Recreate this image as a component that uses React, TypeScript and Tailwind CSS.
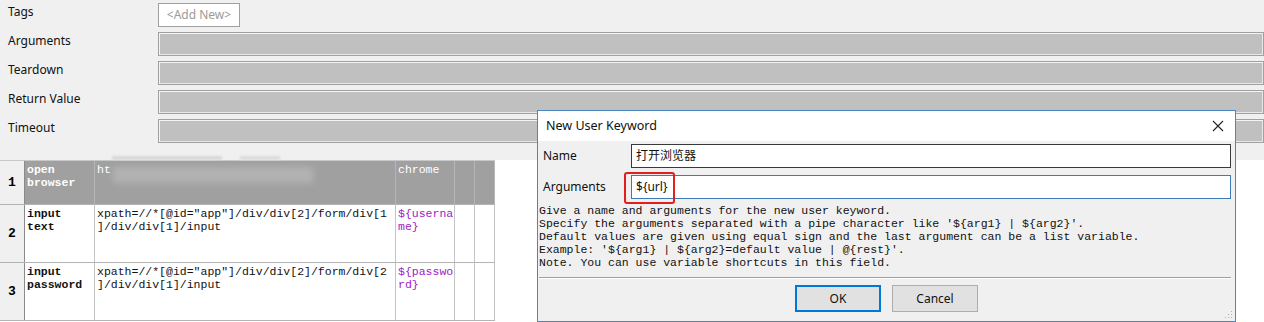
import React from 'react';

const ui = "font-['Noto_Sans','Noto_Sans_CJK_SC',sans-serif]";
const mono = "font-['Liberation_Mono','Noto_Sans_CJK_SC',monospace]";

function GrayField() {
    return (
        <div className="flex-1 h-[24px] border border-[#a0a0a0] bg-[#c0c0c0] shadow-[inset_1px_1px_0_#f4f4f4,inset_-1px_-1px_0_#e8e8e8]"></div>
    );
}

function FieldRow({ label, children }: { label: string; children: React.ReactNode }) {
    return (
        <div className="flex items-start h-[24px]">
            <div className="w-[158px] shrink-0 pl-[8px] mt-[1px] text-[12px] leading-[16px] text-[#111]">{label}</div>
            {children}
        </div>
    );
}

function Settings() {
    return (
        <section className="bg-[#f0f0f0] h-[160px] pt-[3px] flex flex-col gap-[5px]">
            <FieldRow label="Tags">
                <div className="w-[82px] h-[24px] border border-[#a0a0a0] bg-white text-[12px] leading-[22px] text-[#9a9a9a] text-center">
                    &lt;Add New&gt;
                </div>
            </FieldRow>
            <FieldRow label="Arguments"><GrayField /></FieldRow>
            <FieldRow label="Teardown"><GrayField /></FieldRow>
            <FieldRow label="Return Value"><GrayField /></FieldRow>
            <FieldRow label="Timeout"><GrayField /></FieldRow>
            {/* blurred leftovers of the toolbar strip */}
            <div className="flex gap-[18px] mt-[8px] ml-[112px]">
                <div className="w-[110px] h-[4px] bg-[#d8d8d8] blur-[1px]"></div>
                <div className="w-[40px] h-[4px] bg-[#dcdcdc] blur-[1px]"></div>
            </div>
        </section>
    );
}

type Cell = { text: string; kind?: 'kw' | 'var' | 'plain' };

const rows: { h: string; sel?: boolean; cells: Cell[] }[] = [
    { h: 'h-[44px]', sel: true, cells: [{ text: 'open\nbrowser', kind: 'kw' }, { text: 'ht' }, { text: 'chrome' }, { text: '' }, { text: '' }] },
    { h: 'h-[58px]', cells: [{ text: 'input\ntext', kind: 'kw' }, { text: 'xpath=//*[@id="app"]/div/div[2]/form/div[1\n]/div/div[1]/input' }, { text: '${userna\nme}', kind: 'var' }, { text: '' }, { text: '' }] },
    { h: 'h-[58px]', cells: [{ text: 'input\npassword', kind: 'kw' }, { text: 'xpath=//*[@id="app"]/div/div[2]/form/div[2\n]/div/div[1]/input' }, { text: '${passwo\nrd}', kind: 'var' }, { text: '' }, { text: '' }] },
];

const colW = ['w-[70px]', 'w-[301px]', 'w-[59px]', 'w-[20px]', 'w-[20px]'];

function Grid() {
    return (
        <div className="flex-1 bg-white">
            <div className="w-[495px] border-t border-[#c8c8c8]">
                {rows.map((r, i) => (
                    <div key={i} className={`flex ${r.h} border-b border-[#b4b4b4]`}>
                        <div className="w-[25px] shrink-0 bg-[#f0f0f0] border-r border-[#8a8a8a] flex items-center justify-center">
                            <span className={`${mono} font-bold text-[13px] text-black`}>{i + 1}</span>
                        </div>
                        {r.cells.map((c, j) => (
                            <div
                                key={j}
                                className={`${colW[j]} shrink-0 relative overflow-hidden border-r ${r.sel ? 'bg-[#a0a0a0] border-[#b6b6b6] text-white' : 'bg-white border-[#c4c4c4] text-[#111]'} pl-[2px] pt-[2px]`}
                            >
                                {r.sel && j === 1 && (
                                    <div className="absolute left-[18px] top-[6px] w-[200px] h-[16px] bg-[#b2b2b2] blur-[3px]"></div>
                                )}
                                <div
                                    className={`${mono} relative text-[11.5px] leading-[13px] whitespace-pre ${c.kind === 'kw' ? 'font-bold' : ''} ${c.kind === 'var' ? 'text-[#a020c8]' : ''}`}
                                >
                                    {c.text}
                                </div>
                            </div>
                        ))}
                    </div>
                ))}
            </div>
        </div>
    );
}

function Dialog() {
    return (
        <div className={`absolute left-[537px] top-[110px] w-[699px] h-[212px] border border-[#4d86bf] bg-[#f0f0f0] flex flex-col ${ui}`}>
            {/* title bar */}
            <div className="h-[30px] bg-white flex items-center justify-between pl-[8px] pr-[10px]">
                <span className="text-[12.5px] text-[#111]">New User Keyword</span>
                <svg width="12" height="12" viewBox="0 0 12 12" className="mr-[1px]">
                    <path d="M1 1 L11 11 M11 1 L1 11" stroke="#222" strokeWidth="1.1" fill="none" />
                </svg>
            </div>
            {/* name row */}
            <div className="flex items-center h-[24px] mt-[3px] pr-[4px]">
                <span className="w-[93px] pl-[5px] text-[12px] text-[#111]">Name</span>
                <div className="flex-1 h-[24px] border border-[#3a3a3a] bg-white px-[4px] text-[12px] leading-[22px] text-[#111]">打开浏览器</div>
            </div>
            {/* arguments row */}
            <div className="flex items-center h-[24px] mt-[7px] pr-[4px]">
                <span className="w-[93px] pl-[5px] text-[12px] text-[#111]">Arguments</span>
                <div className="flex-1 h-[24px] border border-[#3d7ab8] bg-white px-[4px] text-[12px] leading-[22px] text-[#111] relative">
                    ${'{url}'}
                    <div className="absolute left-[-8px] top-[-4px] w-[51px] h-[32px] border-2 border-[#e41e1e] rounded-[3px]"></div>
                </div>
            </div>
            {/* help text */}
            <div className={`${mono} text-[11.5px] leading-[13px] text-[#111] pl-[1px] mt-[5px] whitespace-pre`}>
                {'Give a name and arguments for the new user keyword.\nSpecify the arguments separated with a pipe character like \'${arg1} | ${arg2}\'.\nDefault values are given using equal sign and the last argument can be a list variable.\nExample: \'${arg1} | ${arg2}=default value | @{rest}\'.\nNote. You can use variable shortcuts in this field.'}
            </div>
            {/* separator */}
            <div className="ml-[1px] mr-[4px] mt-[8px] border-t border-[#a0a0a0] border-b border-b-white"></div>
            {/* buttons */}
            <div className="flex justify-center gap-[11px] mt-[6px]">
                <button className="w-[86px] h-[27px] border-2 border-[#0078d7] bg-[#e1e1e1] text-[12px] text-[#111]">OK</button>
                <button className="w-[86px] h-[27px] border border-[#adadad] bg-[#e1e1e1] text-[12px] text-[#111]">Cancel</button>
            </div>
            {/* resize grip */}
            <svg width="8" height="8" viewBox="0 0 8 8" className="absolute right-[2px] bottom-[2px]">
                <rect x="6" y="0" width="1" height="1" fill="#b0b0b0" />
                <rect x="3" y="3" width="1" height="1" fill="#b0b0b0" />
                <rect x="6" y="3" width="1" height="1" fill="#b0b0b0" />
                <rect x="0" y="6" width="1" height="1" fill="#b0b0b0" />
                <rect x="3" y="6" width="1" height="1" fill="#b0b0b0" />
                <rect x="6" y="6" width="1" height="1" fill="#b0b0b0" />
            </svg>
        </div>
    );
}

export default function App() {
    return (
        <div className={`relative w-[1264px] h-[322px] overflow-hidden bg-white flex flex-col ${ui}`}>
            <Settings />
            <Grid />
            <Dialog />
        </div>
    );
}
